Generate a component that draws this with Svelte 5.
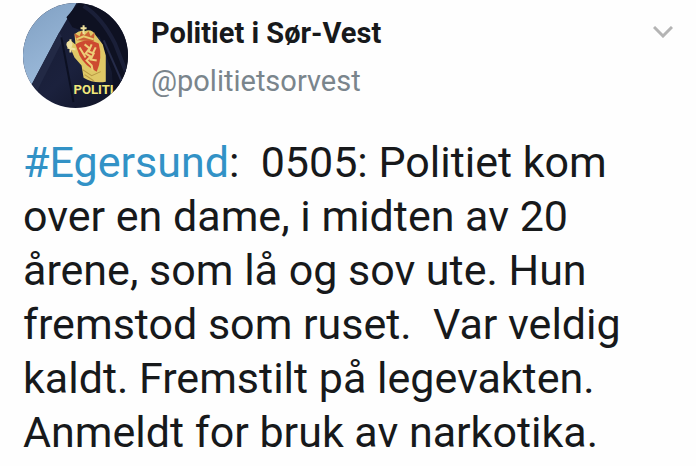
<script>
    let { name = 'Politiet i Sør-Vest', handle = 'politietsorvest' } = $props()

    const hashtag = 'Egersund'
    const message =
        ':  0505: Politiet kom over en dame, i midten av 20 årene, som lå og sov ute. Hun fremstod som ruset.  Var veldig kaldt. Fremstilt på legevakten. Anmeldt for bruk av narkotika.'
</script>

<article class="tweet">
    <header class="tweet-header">
        <a class="avatar" href="#profile" aria-label={name}>
            <svg viewBox="0 0 104 104" aria-hidden="true">
                <defs>
                    <linearGradient id="sky" x1="0" y1="0" x2="0.4" y2="1">
                        <stop offset="0" stop-color="#7f9fc2" />
                        <stop offset="1" stop-color="#9dbbdb" />
                    </linearGradient>
                    <linearGradient id="cloth" x1="0" y1="0" x2="1" y2="1">
                        <stop offset="0" stop-color="#151a31" />
                        <stop offset="0.55" stop-color="#1b213d" />
                        <stop offset="1" stop-color="#0d1020" />
                    </linearGradient>
                </defs>
                <rect width="104" height="104" fill="url(#cloth)" />
                <path d="M0 0H53L36 29L9 80L0 84Z" fill="url(#sky)" />
                <path d="M36 29L9 80L14 87L40 36Z" fill="#222945" />
                <path d="M55 0H104V104H91L88 68L76 34L49 24L43 14Z" fill="#0e1122" />
                <path d="M60 3Q78 14 91 40L102 68" fill="none" stroke="#1a1f38" stroke-width="4" />
                <path d="M38 34L50 98" fill="none" stroke="#0c1022" stroke-width="2" />
                <path d="M80 37L101 85" fill="none" stroke="#252b49" stroke-width="2" />
                <path
                    d="M44 43Q43 38 47 37L52 41L51 31Q56 26 61 28Q68 25 72 32L79 41L82 52L82 78Q70 80 60 74L58 62L51 54L48 47Z"
                    fill="#dfc866"
                />
                <path d="M53 37L51 30L56 33L58 28L61 32L65 28L67 33L71 29L70 38Z" fill="#cc6336" />
                <path d="M53 36L60 33L70 36" fill="none" stroke="#e9cf72" stroke-width="2" />
                <path d="M60 22V31M57 25H63M47 36V49M44 44L52 46" fill="none" stroke="#efe2a0" stroke-width="2" />
                <circle cx="46" cy="41" r="3" fill="#eee0a1" />
                <path d="M52 41Q63 34 75 40Q79 54 73 68Q61 62 56 52Z" fill="#cd4930" />
                <path
                    d="M61 41L66 45L62 50L67 53L63 57L68 62L69 67M68 41L65 48L70 50L67 56L73 57M56 44L62 54M72 44L69 50"
                    fill="none"
                    stroke="#edce78"
                    stroke-width="2"
                />
                <path d="M59 66L68 72L77 68M61 71L70 77" fill="none" stroke="#b99a43" stroke-width="1" />
                <text class="patch" x="50" y="90">POLITI</text>
            </svg>
        </a>
        <div class="author">
            <a class="name" href="#profile">{name}</a>
            <a class="handle" href="#profile">@{handle}</a>
        </div>
        <button class="menu" type="button" aria-label="Meny">
            <svg viewBox="0 0 20 12" aria-hidden="true">
                <path d="M1 1L10 10L19 1" fill="none" stroke="currentColor" stroke-width="3" />
            </svg>
        </button>
    </header>

    <p class="message"><a href="#egersund">#{hashtag}</a>{message}</p>
</article>

<style>
    :global(body) {
        margin: 0;
        background: #fefefe;
    }

    .tweet {
        padding: 3px 23px 0;
        font-family: Roboto, 'Liberation Sans', sans-serif;
        color: #17191b;
    }

    .tweet-header {
        display: flex;
        align-items: flex-start;
        gap: 23px;
    }

    .avatar {
        flex: none;
        width: 105px;
        height: 105px;
        border-radius: 50%;
        overflow: hidden;
    }

    .avatar svg {
        display: block;
        width: 100%;
        height: 100%;
    }

    .patch {
        font-size: 13px;
        font-weight: 700;
        fill: #f1e87b;
    }

    .author {
        display: flex;
        flex: 1;
        flex-direction: column;
        align-items: flex-start;
        padding-top: 6px;
    }

    .name,
    .handle {
        font-size: 29px;
        line-height: 48px;
        text-decoration: none;
    }

    .name {
        font-weight: 700;
        color: #17191b;
    }

    .handle {
        color: #7a858c;
    }

    .menu {
        margin-top: 20px;
        padding: 3px 0;
        border: 0;
        background: none;
        color: #b4b4b4;
        cursor: pointer;
    }

    .menu svg {
        display: block;
        width: 20px;
        height: 12px;
    }

    .message {
        margin: 27px 0 0;
        font-size: 43px;
        line-height: 54px;
        white-space: pre-wrap;
    }

    .message a {
        color: #3292c6;
        text-decoration: none;
    }
</style>
